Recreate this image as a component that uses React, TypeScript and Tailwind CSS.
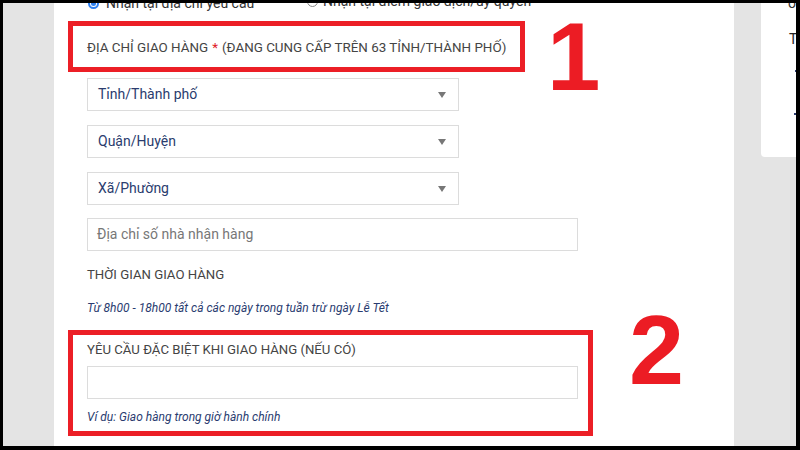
import React from "react";

function Select({ label }: { label: string }) {
  return (
    <div className="w-[372px] h-[33px] border border-[#dcdcdc] bg-white flex items-center justify-between pl-[10px] pr-[12px]">
      <span className="text-[14px] text-[#2a3c6e]">{label}</span>
      <span className="w-0 h-0 border-l-[4px] border-r-[4px] border-t-[6px] border-l-transparent border-r-transparent border-t-[#777]" />
    </div>
  );
}

export default function App() {
  return (
    <div className="w-[800px] h-[450px] bg-black pt-[3px] pl-[3px] pr-[4px] pb-[4px] overflow-hidden" style={{ fontFamily: "Roboto, 'Liberation Sans', sans-serif" }}>
      <div className="w-full h-full bg-[#e4e4e4] flex relative overflow-hidden">
        <div className="ml-[51px] w-[680px] shrink-0 h-full bg-white flex flex-col pl-[33px] relative">
          {/* radio row */}
          <div className="mt-[-10px] h-[20px] flex items-center text-[14px] text-[#333] whitespace-nowrap">
            <span className="ml-[1px] w-[11px] h-[11px] shrink-0 rounded-full border-[2px] border-[#2d7ff0] flex items-center justify-center">
              <span className="w-[5px] h-[5px] rounded-full bg-[#2d7ff0]" />
            </span>
            <span className="ml-[7px] w-[201px] shrink-0">Nhận tại địa chỉ yêu cầu</span>
            <span className="-mt-[4px] w-[11px] h-[11px] shrink-0 rounded-full border border-[#888] bg-white" />
            <span className="ml-[5px] -mt-[4px]">Nhận tại điểm giao dịch/ủy quyền</span>
          </div>

          <div className="mt-[25px] h-[20px] flex items-center text-[13.4px] text-[#444] whitespace-nowrap">
            ĐỊA CHỈ GIAO HÀNG <span className="text-[#e0202a] mx-[4px]">*</span> (ĐANG CUNG CẤP TRÊN 63 TỈNH/THÀNH PHỐ)
          </div>

          <div className="mt-[20px]"><Select label="Tỉnh/Thành phố" /></div>
          <div className="mt-[14px]"><Select label="Quận/Huyện" /></div>
          <div className="mt-[14px]"><Select label="Xã/Phường" /></div>

          <div className="mt-[13px] w-[491px] h-[33px] border border-[#dcdcdc] flex items-center pl-[9px] text-[14px] text-[#777]">
            Địa chỉ số nhà nhận hàng
          </div>

          <div className="mt-[14px] h-[20px] flex items-center text-[13.2px] text-[#444]">THỜI GIAN GIAO HÀNG</div>

          <div className="mt-[15px] h-[16px] flex items-center text-[12px] italic text-[#2a3c70]">
            Từ 8h00 - 18h00 tất cả các ngày trong tuần trừ ngày Lễ Tết
          </div>

          <div className="mt-[24px] h-[20px] flex items-center text-[13.2px] text-[#444]">YÊU CẦU ĐẶC BIỆT KHI GIAO HÀNG (NẾU CÓ)</div>

          <div className="mt-[6px] w-[491px] h-[33px] border border-[#dcdcdc]" />

          <div className="mt-[10px] h-[16px] flex items-center text-[12px] italic text-[#2a3c70]">
            Ví dụ: Giao hàng trong giờ hành chính
          </div>

          {/* annotation boxes */}
          <div className="absolute left-[14px] top-[18px] w-[457px] h-[51px] border-[5px] border-[#ec1f26]" />
          <div className="absolute left-[14px] top-[327px] w-[525px] h-[106px] border-[5px] border-[#ec1f26]" />
          <div className="absolute left-[493px] top-[6px] text-[96px] font-bold text-[#ec1c24] leading-none" style={{ fontFamily: "'Liberation Sans', Arial, sans-serif" }}>1</div>
          <div className="absolute left-[575px] top-[297px] text-[99px] font-bold text-[#ec1c24] leading-none" style={{ fontFamily: "'Liberation Sans', Arial, sans-serif" }}>2</div>
        </div>

        <div className="ml-[27px] w-[36px] shrink-0 h-[154px] bg-white rounded-bl-[4px] relative">
          <span className="absolute left-[27px] top-[-10px] text-[14px] text-[#333]">o</span>
          <span className="absolute left-[28px] top-[26px] text-[14px] text-[#222]">To</span>
          <span className="absolute left-[34px] top-[67px] w-[2px] h-[2px] bg-[#2a3c70]" />
          <span className="absolute left-[33px] top-[110px] w-[2px] h-[2px] bg-[#2a3c70]" />
        </div>
      </div>
    </div>
  );
}
